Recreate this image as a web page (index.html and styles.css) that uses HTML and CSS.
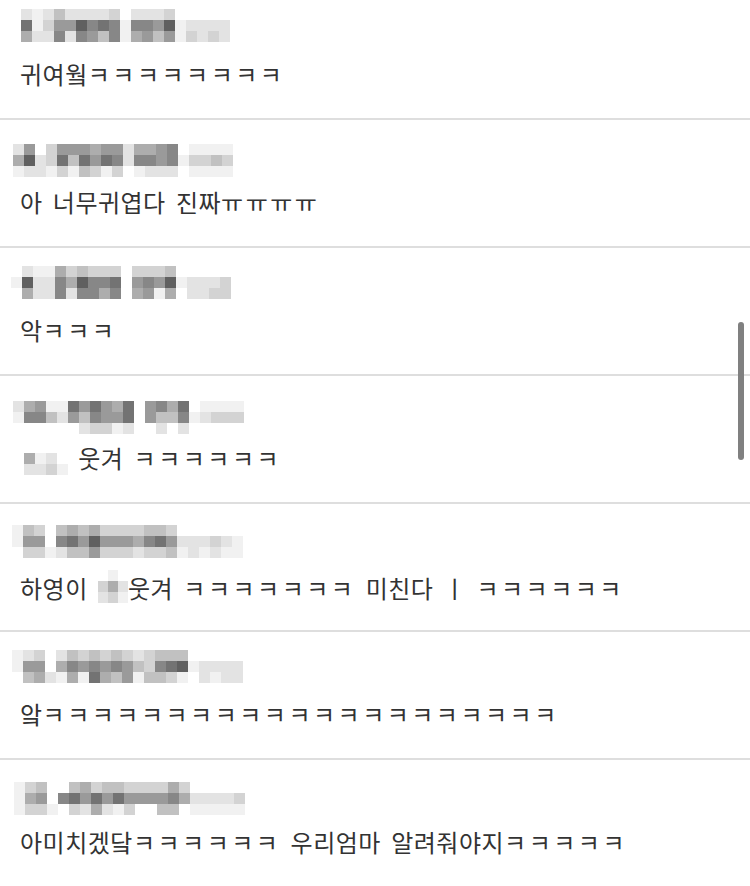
FILE: index.html
```html
<!DOCTYPE html>
<html lang="ko">
<head>
    <meta charset="UTF-8">
    <meta name="viewport" content="width=device-width, initial-scale=1.0">
    <title>댓글</title>
    <link rel="stylesheet" href="styles.css">
</head>
<body>
    <div class="comment-list">
        <div class="comment">
            <div class="comment-head">
                <div class="mosaic" data-dx="1" data-dy="-4"
                     data-rows="2124222230222300000,8136697871776912222,5227276471564613232"></div>
            </div>
            <p class="comment-text">귀여웤<span class="jamo">ㅋㅋㅋㅋㅋㅋㅋㅋ</span></p>
        </div>

        <div class="comment">
            <div class="comment-head">
                <div class="mosaic" data-dx="-7" data-dy="3"
                     data-rows="26036665662556701111,59238486872776713343,12213143130122201111"></div>
            </div>
            <p class="comment-text">아 너무귀엽다 진짜<span class="jamo">ㅠㅠㅠㅠ</span></p>
        </div>

        <div class="comment">
            <div class="comment-head">
                <div class="mosaic" data-dx="-9" data-dy="-3"
                     data-rows="02115343330333400000,19227597780676912223,05227277570561502233"></div>
            </div>
            <p class="comment-text">악<span class="jamo">ㅋㅋㅋ</span></p>
        </div>

        <div class="comment">
            <div class="comment-head">
                <div class="mosaic" data-dx="-7" data-dy="4"
                     data-rows="256118686580675801111,177426476680644712333,000000233120020200000"></div>
            </div>
            <p class="comment-text"><span class="mosaic mosaic-inline low" data-rows="5120,2231"></span> 웃겨 <span class="jamo">ㅋㅋㅋㅋㅋㅋ</span></p>
        </div>

        <div class="comment">
            <div class="comment-head">
                <div class="mosaic" data-dx="-8" data-dy="0"
                     data-rows="143045453333443000000,166078696665786222321,033124463332334121211"></div>
            </div>
            <p class="comment-text">하영이 <span class="mosaic mosaic-inline narrow" data-rows="010,352,231"></span>웃겨 <span class="jamo">ㅋㅋㅋㅋㅋㅋㅋ</span> 미친다 ㅣ <span class="jamo">ㅋㅋㅋㅋㅋㅋ</span></p>
        </div>

        <div class="comment">
            <div class="comment-head">
                <div class="mosaic" data-dx="-8" data-dy="-3"
                     data-rows="123024343432344400000,166057676764378912222,045215185461443102122"></div>
            </div>
            <p class="comment-text">앜<span class="jamo">ㅋㅋㅋㅋㅋㅋㅋㅋㅋㅋㅋㅋㅋㅋㅋㅋㅋㅋㅋㅋㅋ</span></p>
        </div>

        <div class="comment">
            <div class="comment-head">
                <div class="mosaic" data-dx="-6" data-dy="1"
                     data-rows="134004534433335300000,156078686866667522223,133103252130044011111"></div>
            </div>
            <p class="comment-text">아미치겠닼<span class="jamo">ㅋㅋㅋㅋㅋㅋ</span> 우리엄마 알려줘야지<span class="jamo">ㅋㅋㅋㅋㅋ</span></p>
        </div>
    </div>

    <div class="scroll-thumb"></div>

    <script>
        // 닉네임 모자이크 칸 채우기
        document.querySelectorAll('.mosaic').forEach(function(box) {
            box.dataset.rows.split(',').forEach(function(row) {
                const line = document.createElement('div');
                line.className = 'mosaic-row';
                row.split('').forEach(function(level) {
                    const cell = document.createElement('span');
                    cell.className = 'cell lv' + level;
                    line.appendChild(cell);
                });
                box.appendChild(line);
            });
            if (box.dataset.dx) box.style.marginLeft = box.dataset.dx + 'px';
            if (box.dataset.dy) box.style.marginTop = box.dataset.dy + 'px';
        });
    </script>
</body>
</html>
```

FILE: styles.css
```css
body {
    margin: 0;
    background: #fff;
    font-family: "Noto Sans CJK KR", "Noto Sans", sans-serif;
    color: #333;
    overflow: hidden;
}
.comment-list {
    margin-top: -8px;
}
.comment {
    padding: 21px 20px 28px;
    border-bottom: 2px solid #dedede;
}
.comment-head {
    display: flex;
    height: 33px;
    margin-bottom: 12px;
}
.comment-text {
    margin: 0;
    height: 32px;
    font-size: 24px;
    line-height: 32px;
    letter-spacing: 0.5px;
    word-spacing: 3px;
    white-space: nowrap;
}
.jamo {
    letter-spacing: 2.5px;
}
.mosaic-row {
    display: flex;
}
.cell {
    display: block;
    width: 11px;
    height: 11px;
}
.mosaic-inline {
    display: inline-block;
    overflow: hidden;
    vertical-align: -5px;
}
.mosaic-inline.low {
    vertical-align: -7px;
    margin-left: 4px;
}
.mosaic-inline.narrow .cell {
    width: 10px;
}
.lv0 { background: #fff; }
.lv1 { background: #f1f1f1; }
.lv2 { background: #e3e3e3; }
.lv3 { background: #d3d3d3; }
.lv4 { background: #c1c1c1; }
.lv5 { background: #adadad; }
.lv6 { background: #9a9a9a; }
.lv7 { background: #878787; }
.lv8 { background: #737373; }
.lv9 { background: #606060; }
.scroll-thumb {
    position: absolute;
    left: 738px;
    top: 322px;
    width: 6px;
    height: 138px;
    border-radius: 3px;
    background: #808080;
}
```
